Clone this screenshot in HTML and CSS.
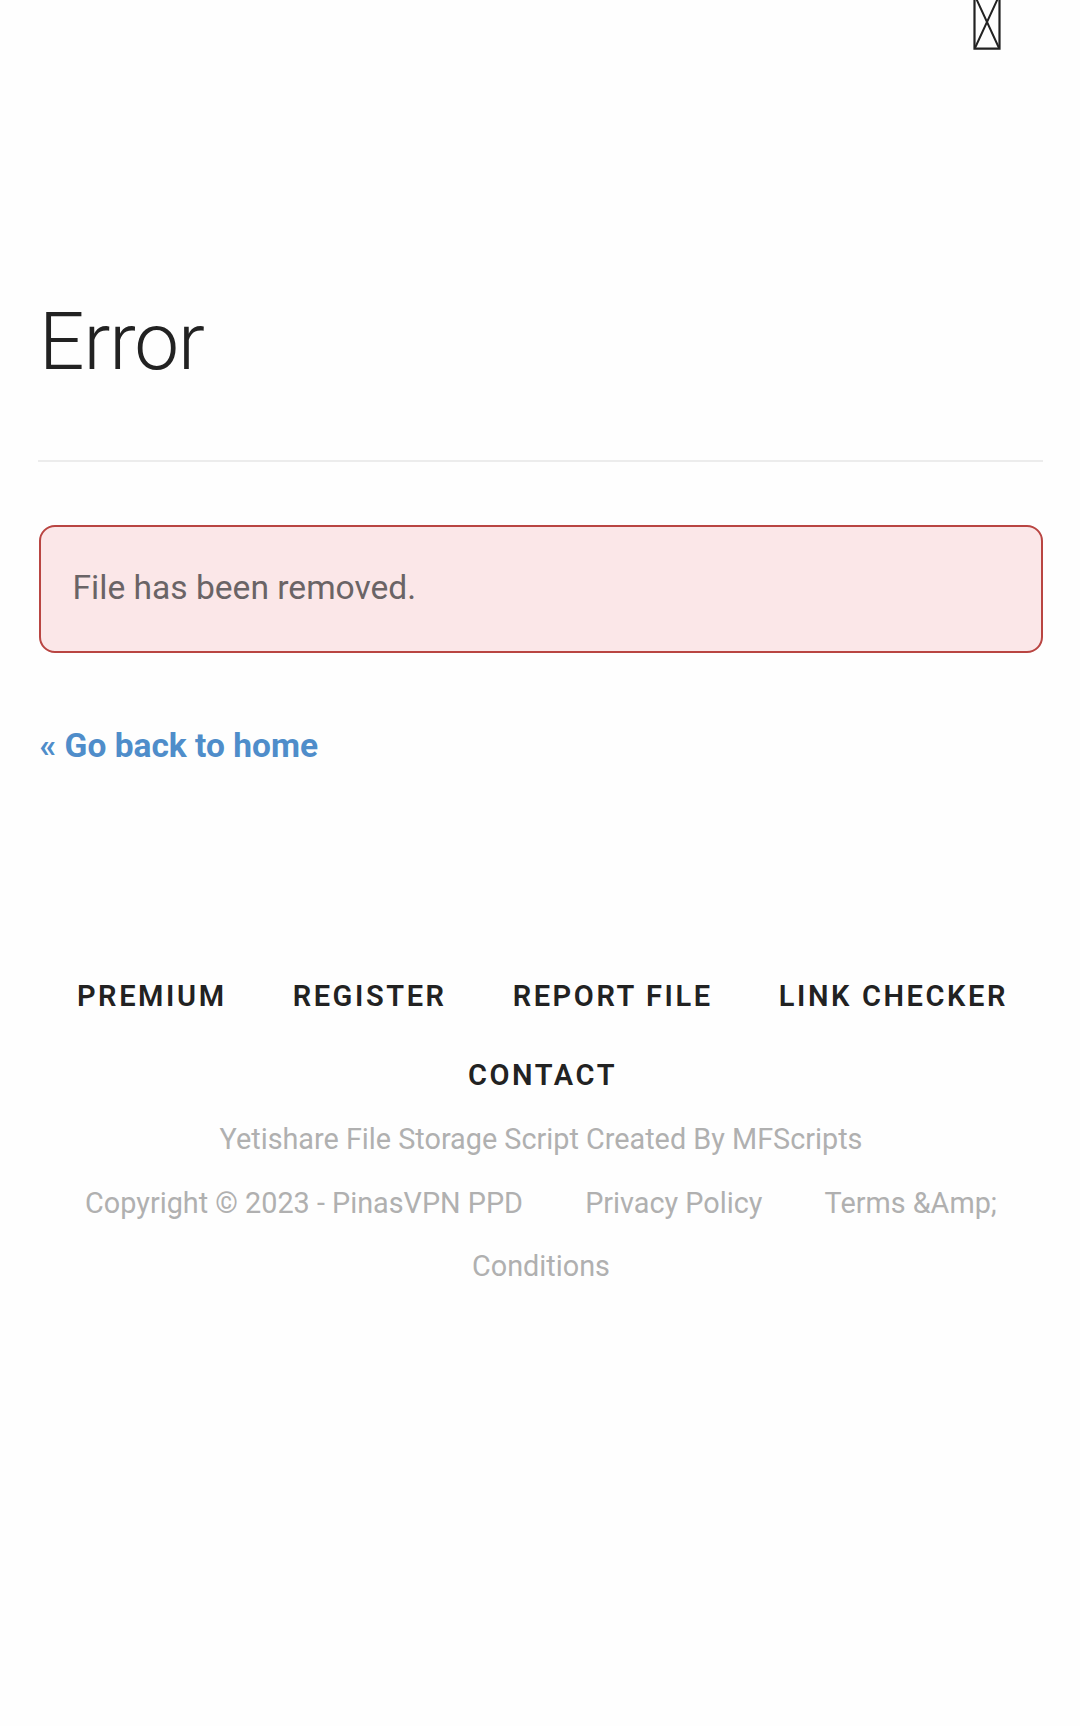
FILE: index.html
```html
<!DOCTYPE html>
<html lang="en">
<head>
  <meta charset="UTF-8">
  <meta name="viewport" content="width=device-width, initial-scale=1.0">
  <title>Error - PinasVPN PPD</title>
  <link rel="stylesheet" href="styles.css">
</head>
<body>
  <header class="navbar">
    <button class="menu-toggle" aria-label="Menu">
      <svg width="28" height="50" viewBox="0 0 28 50" fill="none" stroke="currentColor">
        <path d="M1.5 -4V48.7H26.5V-4" stroke-width="2.2"/>
        <path d="M2 48L26 -4M26 48L2 -4" stroke-width="2"/>
      </svg>
    </button>
  </header>

  <main class="container">
    <h1>Error</h1>
    <div class="alert">File has been removed.</div>
    <a href="#" class="back-link">&laquo; Go back to home</a>
  </main>

  <footer>
    <nav class="footer-nav">
      <a href="#">Premium</a>
      <a href="#">Register</a>
      <a href="#">Report File</a>
      <a href="#">Link Checker</a>
      <a href="#">Contact</a>
    </nav>
    <div class="copyright">
      <p>Yetishare File Storage Script Created By MFScripts</p>
      <p>
        Copyright &copy; 2023 - PinasVPN PPD
        <a href="#">Privacy Policy</a>
        <a href="#">Terms &amp;Amp; Conditions</a>
      </p>
    </div>
  </footer>
</body>
</html>
```

FILE: styles.css
```css
:root {
  --text-color: #222222;
  --muted-color: #b0b0b0;
  --link-color: #4f8dca;
  --error-bg: #fbe7e8;
  --error-border: #b94542;
}

* {
  margin: 0;
  padding: 0;
  box-sizing: border-box;
}

body {
  font-family: Roboto, sans-serif;
  background-color: #fefefe;
  color: var(--text-color);
  min-height: 100vh;
}

.navbar {
  display: flex;
  justify-content: flex-end;
  height: 260px;
  padding-right: 79px;
}

.menu-toggle {
  align-self: flex-start;
  background: transparent;
  border: none;
  color: var(--text-color);
  cursor: pointer;
}

.menu-toggle svg {
  display: block;
}

.container {
  padding: 0 37px 0 38px;
}

h1 {
  height: 202px;
  padding: 35px 0 0 1px;
  font-size: 80px;
  font-weight: 300;
  line-height: 94px;
  letter-spacing: -1.1px;
  border-bottom: 2px solid #ececec;
}

.alert {
  height: 128px;
  margin: 63px 0 0 1px;
  padding: 40px 31.5px;
  font-size: 33.6px;
  line-height: 42px;
  color: #6a6466;
  background-color: var(--error-bg);
  border: 2px solid var(--error-border);
  border-radius: 16px;
}

.back-link {
  display: block;
  margin: 72px 0 0 1.5px;
  font-size: 33.5px;
  font-weight: 700;
  line-height: 42px;
  color: var(--link-color);
  text-decoration: none;
}

footer {
  padding: 190px 37px 0 39px;
  text-align: center;
}

.footer-nav {
  display: flex;
  flex-wrap: wrap;
  justify-content: center;
  column-gap: 66px;
  padding-left: 3px;
}

.footer-nav a {
  font-size: 29px;
  font-weight: 600;
  line-height: 79px;
  letter-spacing: 2.6px;
  text-transform: uppercase;
  color: var(--text-color);
  text-decoration: none;
}

.copyright {
  margin-top: -7px;
  font-size: 28.8px;
  line-height: 63.5px;
  color: var(--muted-color);
}

.copyright a {
  margin-left: 55px;
  color: inherit;
  text-decoration: none;
}
```
